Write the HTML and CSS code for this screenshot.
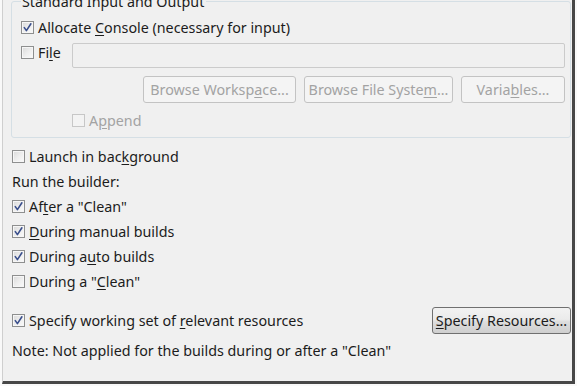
FILE: index.html
```html
<!DOCTYPE html>
<html>
<head>
<meta charset="utf-8">
<link rel="stylesheet" href="styles.css">
</head>
<body>
<div class="frame">
  <fieldset class="group">
    <legend class="group-title">Standard Input and Output</legend>
    <div class="row first">
      <span class="cb checked"><svg viewBox="0 0 11 11" width="11" height="11"><path d="M2.3 5.6 L4.4 8.6 L8.9 1.8" /></svg></span>
      <span>Allocate <u>C</u>onsole (necessary for input)</span>
    </div>
    <div class="file-row">
      <div class="row">
        <span class="cb"></span>
        <span>Fi<u>l</u>e</span>
      </div>
      <div class="field"></div>
    </div>
    <div class="btn-row">
      <span class="btn disabled w-ws">Browse Worksp<u>a</u>ce...</span>
      <span class="btn disabled w-fs">Browse File Syste<u>m</u>...</span>
      <span class="btn disabled w-var">Varia<u>b</u>les...</span>
    </div>
    <div class="row append">
      <span class="cb disabled"></span>
      <span class="muted">A<u>p</u>pend</span>
    </div>
  </fieldset>

  <div class="opts">
    <div class="row tall">
      <span class="cb"></span>
      <span>Launch in bac<u>k</u>ground</span>
    </div>
    <div class="row">
      <span>Run the builder:</span>
    </div>
    <div class="row">
      <span class="cb checked"><svg viewBox="0 0 11 11" width="11" height="11"><path d="M2.3 5.6 L4.4 8.6 L8.9 1.8" /></svg></span>
      <span>Af<u>t</u>er a "Clean"</span>
    </div>
    <div class="row">
      <span class="cb checked"><svg viewBox="0 0 11 11" width="11" height="11"><path d="M2.3 5.6 L4.4 8.6 L8.9 1.8" /></svg></span>
      <span><u>D</u>uring manual builds</span>
    </div>
    <div class="row">
      <span class="cb checked"><svg viewBox="0 0 11 11" width="11" height="11"><path d="M2.3 5.6 L4.4 8.6 L8.9 1.8" /></svg></span>
      <span>During a<u>u</u>to builds</span>
    </div>
    <div class="row">
      <span class="cb"></span>
      <span>During a "<u>C</u>lean"</span>
    </div>
    <div class="spec-row">
      <div class="row">
        <span class="cb checked"><svg viewBox="0 0 11 11" width="11" height="11"><path d="M2.3 5.6 L4.4 8.6 L8.9 1.8" /></svg></span>
        <span>Specify working set of <u>r</u>elevant resources</span>
      </div>
      <span class="btn active"><u>S</u>pecify Resources...</span>
    </div>
    <div class="row note">
      <span>Note: Not applied for the builds during or after a "Clean"</span>
    </div>
  </div>
</div>
</body>
</html>
```
FILE: styles.css
```css
html, body {
  margin: 0;
  padding: 0;
  background: #f9f9f9;
}
body {
  width: 577px;
  height: 386px;
  overflow: hidden;
  font-family: "Noto Sans", "Open Sans", sans-serif;
  font-size: 14.3px;
  color: #1c1c1c;
}
u {
  text-decoration-thickness: 1px;
  text-underline-offset: 2px;
}
.frame {
  margin-left: 2px;
  width: 569px;
  height: 381px;
  border-left: 1px solid #cfcfcf;
  border-right: 3px solid #474747;
  border-bottom: 3px solid #474747;
  background: #f0f0f0;
  overflow: hidden;
  display: flex;
  flex-direction: column;
}
.group {
  margin: -7px 1px 0 8px;
  padding: 0 5px 4px 9px;
  border: 1px solid #d5dfe5;
  border-radius: 3px;
  min-width: 0;
}
.group-title {
  padding: 0 2px 0 1px;
  line-height: 17px;
  background: #f0f0f0;
}
.row {
  display: flex;
  align-items: center;
  gap: 4px;
  height: 25px;
  white-space: nowrap;
}
.row.first {
  margin-top: 5px;
}
.cb {
  box-sizing: border-box;
  width: 13px;
  height: 13px;
  flex: none;
  border: 1px solid #8e8f8f;
  background: linear-gradient(135deg, #d9d9d9 0%, #ededed 50%, #fbfbfb 100%);
  box-shadow: inset 0 0 0 1px #f6f6f6;
  display: flex;
  align-items: center;
  justify-content: center;
}
.cb svg path {
  fill: none;
  stroke: #3a4f8c;
  stroke-width: 1.6;
  stroke-linecap: round;
  stroke-linejoin: round;
}
.cb.disabled {
  border-color: #c7c7c7;
  background: #f3f3f3;
  box-shadow: none;
}
.file-row {
  display: flex;
  align-items: flex-start;
  gap: 11px;
}
.field {
  flex: 1;
  height: 25px;
  margin-top: 3px;
  box-sizing: border-box;
  border: 1px solid #cbcbcb;
  border-radius: 2px;
  background: #f0f0f0;
}
.btn-row {
  display: flex;
  justify-content: flex-end;
  gap: 8px;
  margin-top: 8px;
}
.btn {
  box-sizing: border-box;
  height: 27px;
  display: flex;
  align-items: center;
  justify-content: center;
  border-radius: 3px;
  white-space: nowrap;
}
.btn.disabled {
  border: 1px solid #c3c3c3;
  background: #f4f4f4;
  color: #a3a3a3;
}
.w-ws { width: 153px; }
.w-fs { width: 149px; }
.w-var { width: 104px; }
.muted {
  color: #a3a3a3;
}
.row.append {
  margin-top: 5px;
  padding-left: 51px;
}
.opts {
  padding: 0 1px 0 9px;
  display: flex;
  flex-direction: column;
}
.row.tall {
  margin-top: 5px;
  height: 26px;
}
.spec-row {
  margin-top: 13px;
  display: flex;
  align-items: center;
  justify-content: space-between;
  height: 27px;
}
.btn.active {
  width: 139px;
  border: 1px solid #707070;
  background: linear-gradient(#f2f2f2 0%, #ebebeb 45%, #dddddd 55%, #cfcfcf 100%);
  color: #1c1c1c;
}
.row.note {
  margin-top: 4px;
}
```
